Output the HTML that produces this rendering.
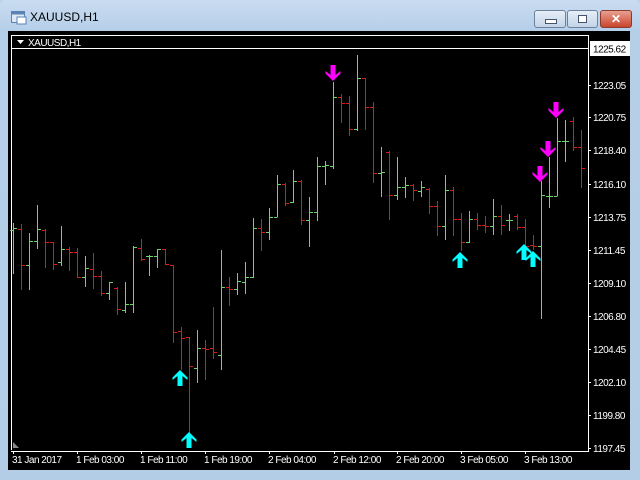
<!DOCTYPE html>
<html><head><meta charset="utf-8"><style>
html,body{margin:0;padding:0;width:640px;height:480px;overflow:hidden;background:#bcd3ea;font-family:"Liberation Sans",sans-serif}
.win{position:absolute;left:0;top:0;width:640px;height:480px;background:linear-gradient(#c9dcf0,#b6cfe9 30px,#b4cde6);border-radius:6px 6px 0 0}
.title{position:absolute;left:30px;top:10px;font-size:12px;color:#000}
.btn{position:absolute;top:10px;height:16px;border:1px solid #6d819a;border-radius:3px;background:linear-gradient(#e6eef8,#c3d4e8)}
.chart{position:absolute;left:8px;top:31px;width:622px;height:439px;background:#000}
</style></head><body>
<div class="win">
<svg style="position:absolute;left:11px;top:11px" width="16" height="14"><rect x="0.5" y="0.5" width="13" height="11" fill="#dfe9f5" stroke="#5a82b4"/><rect x="0.5" y="0.5" width="13" height="3" fill="#5a82b4"/><rect x="6" y="6" width="9" height="7" fill="#fff" stroke="#5a82b4"/></svg>
<div class="title">XAUUSD,H1</div>
<div class="btn" style="left:534px;width:30px"><div style="position:absolute;left:10px;top:8px;width:10px;height:3px;background:#fff;border:1px solid #44556b"></div></div>
<div class="btn" style="left:567px;width:29px"><div style="position:absolute;left:10px;top:4px;width:7px;height:6px;border:1px solid #44556b;background:#fff"></div></div>
<div class="btn" style="left:600px;width:30px;background:linear-gradient(#e8a090,#c9452e);border-color:#8b3a2e;color:#fff;font-weight:bold;font-size:12px;text-align:center;line-height:16px">✕</div>
<div class="chart"></div>
<svg style="position:absolute;left:0;top:0" width="640" height="480" font-family="Liberation Sans, sans-serif" font-size="10" letter-spacing="-0.5">
<defs>
<polygon id="up" points="0,0 7.5,7.5 7.5,10 2.5,6 2.5,16 -2.5,16 -2.5,6 -7.5,10 -7.5,7.5" fill="#00ffff"/>
<polygon id="dn" points="0,0 7.5,-7.5 7.5,-10 2.5,-6 2.5,-16 -2.5,-16 -2.5,-6 -7.5,-10 -7.5,-7.5" fill="#ff00ff"/>
</defs>
<g shape-rendering="crispEdges">
<path d="M11.5 35V450 M11.5 35.5H589 M11.5 48.5H589 M588.5 35V48" stroke="#fff" fill="none"/>
<path d="M588.5 48V451 M11 451.5H589" stroke="#fff" fill="none"/>
</g>
<polygon points="13,442 19,448 13,448" fill="#888"/>
<path d="M17 40h7l-3.5 4z" fill="#fff"/>
<text x="28" y="46" fill="#fff">XAUUSD,H1</text>
<rect x="590" y="41" width="40" height="15" fill="#fff"/>
<text x="593" y="52.5" fill="#000">1225.62</text>
<g fill="#fff">
<text x="593" y="89">1223.05</text><text x="593" y="121">1220.75</text><text x="593" y="154">1218.40</text><text x="593" y="188">1216.10</text><text x="593" y="221">1213.75</text><text x="593" y="254">1211.45</text><text x="593" y="287">1209.10</text><text x="593" y="320">1206.80</text><text x="593" y="353">1204.45</text><text x="593" y="386">1202.10</text><text x="593" y="419">1199.80</text><text x="593" y="452">1197.45</text>
<text x="12" y="463">31 Jan 2017</text><text x="76" y="463">1 Feb 03:00</text><text x="140" y="463">1 Feb 11:00</text><text x="204" y="463">1 Feb 19:00</text><text x="268" y="463">2 Feb 04:00</text><text x="333" y="463">2 Feb 12:00</text><text x="396" y="463">2 Feb 20:00</text><text x="460" y="463">3 Feb 05:00</text><text x="524" y="463">3 Feb 13:00</text>
</g>
<g shape-rendering="crispEdges">
<path stroke="#fff" d="M588 85.5h3M588 117.5h3M588 150.5h3M588 184.5h3M588 217.5h3M588 250.5h3M588 283.5h3M588 316.5h3M588 349.5h3M588 382.5h3M588 415.5h3M588 448.5h3M13.5 451v3M77.5 451v3M141.5 451v3M205.5 451v3M269.5 451v3M334.5 451v3M397.5 451v3M461.5 451v3M525.5 451v3"/>
<path stroke="#6fd36f" fill="none" d="
M13.5 223V274M10 230.5H13.5M13.5 228.5H17
M29.5 233V290M26 265.5H29.5M29.5 241.5H33
M37.5 205V249M34 241.5H37.5M37.5 229.5H41
M61.5 226V266M58 262.5H61.5M61.5 249.5H65
M85.5 256V287M82 277.5H85.5M85.5 268.5H89
M109.5 282V300M106 293.5H109.5M109.5 282.5H113
M125.5 282V313M122 310.5H125.5M125.5 304.5H129
M133.5 246V313M130 304.5H133.5M133.5 247.5H137
M149.5 255V276M146 256.5H149.5M149.5 256.5H153
M157.5 249V268M154 256.5H157.5M157.5 249.5H161
M197.5 330V383M194 368.5H197.5M197.5 348.5H201
M221.5 250V370M218 355.5H221.5M221.5 287.5H225
M237.5 273V295M234 289.5H237.5M237.5 281.5H241
M245.5 262V294M242 282.5H245.5M245.5 277.5H249
M253.5 218V278M250 277.5H253.5M253.5 228.5H257
M269.5 208V240M266 232.5H269.5M269.5 217.5H273
M277.5 175V217M274 217.5H277.5M277.5 184.5H281
M293.5 170V203M290 202.5H293.5M293.5 181.5H297
M309.5 197V247M306 220.5H309.5M309.5 212.5H313
M317.5 157V221M314 212.5H317.5M317.5 166.5H321
M325.5 161V185M322 166.5H325.5M325.5 165.5H329
M333.5 82V169M330 166.5H333.5M333.5 97.5H337
M357.5 55V131M354 129.5H357.5M357.5 78.5H361
M381.5 147V197M378 173.5H381.5M381.5 172.5H385
M397.5 157V200M394 195.5H397.5M397.5 187.5H401
M405.5 177V198M402 187.5H405.5M405.5 185.5H409
M421.5 181V197M418 191.5H421.5M421.5 187.5H425
M445.5 175V240M442 226.5H445.5M445.5 190.5H449
M469.5 211V243M466 242.5H469.5M469.5 219.5H473
M493.5 199V235M490 226.5H493.5M493.5 216.5H497
M509.5 214V231M506 220.5H509.5M509.5 220.5H513
M541.5 181V319M538 246.5H541.5M541.5 195.5H545
M549.5 157V208M546 196.5H549.5M549.5 196.5H553
M557.5 118V196M554 196.5H557.5M557.5 141.5H561
M565.5 120V162M562 141.5H565.5M565.5 141.5H569"/>
<path stroke="#d0201c" fill="none" d="
M21.5 224V290M18 229.5H21.5M21.5 265.5H25
M45.5 229V268M42 230.5H45.5M45.5 242.5H49
M53.5 242V270M50 242.5H53.5M53.5 264.5H57
M69.5 247V271M66 249.5H69.5M69.5 252.5H73
M77.5 248V278M74 252.5H77.5M77.5 277.5H81
M93.5 253V289M90 269.5H93.5M93.5 276.5H97
M101.5 271V296M98 276.5H101.5M101.5 293.5H105
M117.5 287V315M114 288.5H117.5M117.5 309.5H121
M141.5 239V261M138 248.5H141.5M141.5 259.5H145
M165.5 249V265M162 249.5H165.5M165.5 264.5H169
M173.5 265V343M170 265.5H173.5M173.5 332.5H177
M181.5 327V370M178 331.5H181.5M181.5 338.5H185
M189.5 337V438M186 337.5H189.5M189.5 366.5H193
M205.5 340V380M202 348.5H205.5M205.5 349.5H209
M213.5 307V359M210 348.5H213.5M213.5 352.5H217
M229.5 277V306M226 287.5H229.5M229.5 289.5H233
M261.5 219V251M258 228.5H261.5M261.5 232.5H265
M285.5 183V206M282 184.5H285.5M285.5 203.5H289
M301.5 180V225M298 181.5H301.5M301.5 220.5H305
M341.5 94V123M338 97.5H341.5M341.5 103.5H345
M349.5 96V136M346 103.5H349.5M349.5 129.5H353
M365.5 78V130M362 78.5H365.5M365.5 107.5H369
M373.5 102V183M370 107.5H373.5M373.5 173.5H377
M389.5 151V220M386 152.5H389.5M389.5 195.5H393
M413.5 184V201M410 185.5H413.5M413.5 190.5H417
M429.5 188V214M426 189.5H429.5M429.5 206.5H433
M437.5 201V236M434 206.5H437.5M437.5 226.5H441
M453.5 187V236M450 190.5H453.5M453.5 219.5H457
M461.5 213V251M458 219.5H461.5M461.5 242.5H465
M477.5 213V230M474 219.5H477.5M477.5 225.5H481
M485.5 216V233M482 225.5H485.5M485.5 226.5H489
M501.5 205V235M498 216.5H501.5M501.5 225.5H505
M517.5 214V230M514 216.5H517.5M517.5 227.5H521
M525.5 219V248M522 227.5H525.5M525.5 246.5H529
M533.5 235V250M530 245.5H533.5M533.5 246.5H537
M573.5 117V151M570 121.5H573.5M573.5 147.5H577
M581.5 130V188M578 147.5H581.5M581.5 168.5H585"/>
</g>
<use href="#up" x="180" y="370"/><use href="#up" x="189" y="432"/><use href="#up" x="460" y="252"/><use href="#up" x="524" y="244"/><use href="#up" x="533" y="251"/>
<use href="#dn" x="333" y="81"/><use href="#dn" x="556" y="118"/><use href="#dn" x="548" y="157"/><use href="#dn" x="540" y="182"/>
</svg>
</div>
</body></html>
